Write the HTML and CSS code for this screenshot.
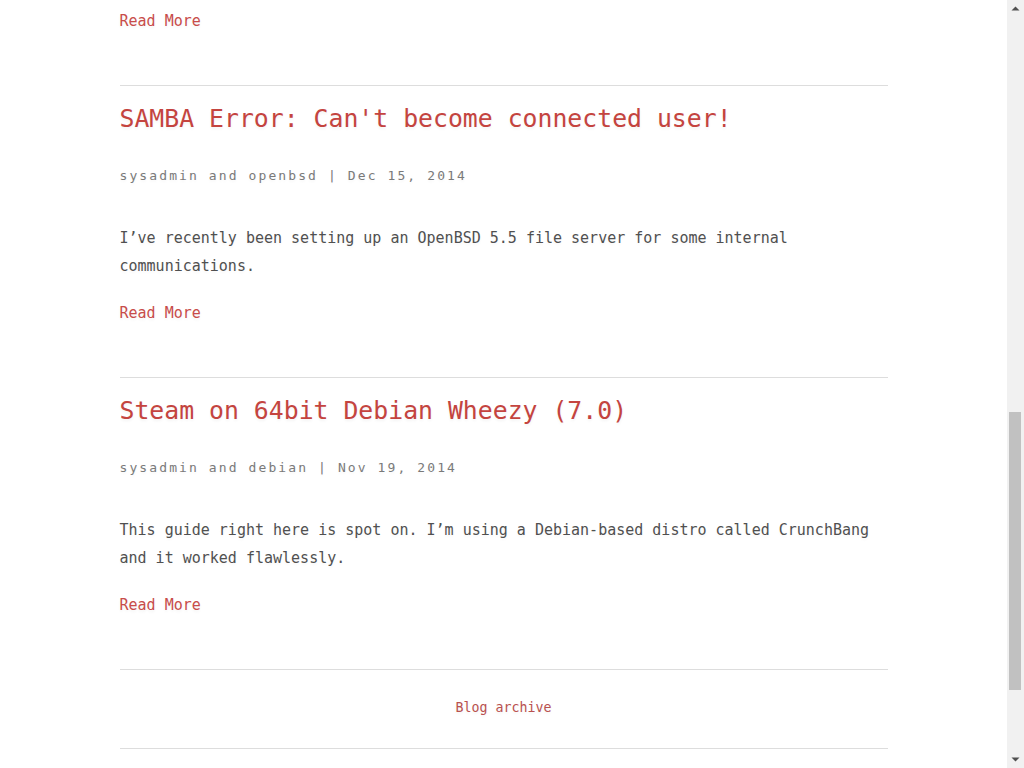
FILE: index.html
```html
<!DOCTYPE html>
<html lang="en">
<head>
<meta charset="utf-8">
<title>Blog</title>
<link rel="stylesheet" href="styles.css">
</head>
<body>
<main class="page">
  <article class="post post-previous">
    <a class="read-more" href="#">Read More</a>
  </article>
  <article class="post">
    <h2 class="post-title"><a href="#">SAMBA Error: Can't become connected user!</a></h2>
    <p class="post-meta">sysadmin and openbsd | Dec 15, 2014</p>
    <p class="post-excerpt">I’ve recently been setting up an OpenBSD 5.5 file server for some internal communications.</p>
    <a class="read-more" href="#">Read More</a>
  </article>
  <article class="post">
    <h2 class="post-title"><a href="#">Steam on 64bit Debian Wheezy (7.0)</a></h2>
    <p class="post-meta">sysadmin and debian | Nov 19, 2014</p>
    <p class="post-excerpt">This guide right here is spot on. I’m using a Debian-based distro called CrunchBang and it worked flawlessly.</p>
    <a class="read-more" href="#">Read More</a>
  </article>
  <nav class="archive-nav">
    <a class="archive-link" href="#">Blog archive</a>
  </nav>
</main>
<div class="scrollbar" aria-hidden="true">
  <div class="scroll-button">
    <svg width="9" height="5" viewBox="0 0 9 5"><polygon points="0.5,4.5 4.5,0.5 8.5,4.5" fill="#505050"/></svg>
  </div>
  <div class="scroll-track">
    <div class="scroll-thumb"></div>
  </div>
  <div class="scroll-button">
    <svg width="9" height="5" viewBox="0 0 9 5"><polygon points="0.5,0.5 8.5,0.5 4.5,4.5" fill="#505050"/></svg>
  </div>
</div>
</body>
</html>
```

FILE: styles.css
```css
html {
  background: #ffffff;
}

body {
  margin: 0 17px 0 0;
  font-family: "DejaVu Sans Mono", "Liberation Mono", monospace;
  color: #444444;
  background: #ffffff;
}

.page {
  width: 768px;
  margin: 0 auto;
}

.post {
  border-top: 1px solid #dddddd;
  padding: 15px 0 50px;
}

.post-previous {
  border-top: 0;
  padding-top: 7px;
}

.post-title {
  margin: 0 0 27px;
  font-size: 24.8px;
  line-height: 36px;
  font-weight: normal;
}

.post-title a {
  color: #c4443f;
  text-decoration: none;
  text-shadow: 0 2px 3px rgba(0, 0, 0, 0.05);
}

.post-meta {
  margin: 0 0 36px;
  font-size: 13px;
  line-height: 24px;
  letter-spacing: 2.1px;
  color: #7a7a7a;
  text-shadow: 0 2px 3px rgba(0, 0, 0, 0.04);
}

.post-excerpt {
  margin: 0 0 19px;
  font-size: 15px;
  line-height: 28px;
  color: #505050;
  text-shadow: 0 2px 3px rgba(0, 0, 0, 0.04);
}

.read-more {
  display: block;
  width: max-content;
  font-size: 15px;
  line-height: 28px;
  color: #c84c4a;
  text-decoration: none;
  text-shadow: 0 2px 3px rgba(0, 0, 0, 0.05);
}

.archive-nav {
  border-top: 1px solid #dddddd;
  border-bottom: 1px solid #dddddd;
  padding: 26px 0 28px;
  text-align: center;
}

.archive-link {
  font-size: 13.3px;
  line-height: 24px;
  color: #b9514f;
  text-decoration: none;
  text-shadow: 0 2px 3px rgba(0, 0, 0, 0.05);
}

/* browser scrollbar as shown in the capture */
.scrollbar {
  position: fixed;
  top: 0;
  right: 0;
  width: 17px;
  height: 100vh;
  display: flex;
  flex-direction: column;
  background: #f1f1f1;
}

.scroll-button {
  height: 17px;
  flex: none;
  display: flex;
  align-items: center;
  justify-content: center;
}

.scroll-button svg {
  display: block;
}

.scroll-track {
  flex: 1;
  display: flex;
  flex-direction: column;
}

.scroll-thumb {
  margin: 395px 3px 0 2px;
  height: 278px;
  background: #c1c1c1;
}
```
